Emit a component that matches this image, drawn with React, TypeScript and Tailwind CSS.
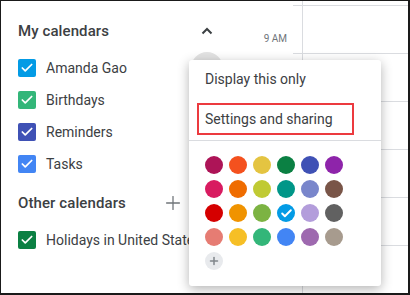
import { Check, Plus } from "lucide-react";

const calendars = [
  { name: "Amanda Gao", color: "bg-[#039be5]", active: true },
  { name: "Birthdays", color: "bg-[#33b679]" },
  { name: "Reminders", color: "bg-[#3f51b5]" },
  { name: "Tasks", color: "bg-[#4285f4]" },
];

const swatches = [
  ["bg-[#ad1457]", "bg-[#f4511e]", "bg-[#e4c441]", "bg-[#0b8043]", "bg-[#3f51b5]", "bg-[#8e24aa]"],
  ["bg-[#d81b60]", "bg-[#ef6c00]", "bg-[#c0ca33]", "bg-[#009688]", "bg-[#7986cb]", "bg-[#795548]"],
  ["bg-[#d50000]", "bg-[#f09300]", "bg-[#7cb342]", "bg-[#039be5]", "bg-[#b39ddb]", "bg-[#616161]"],
  ["bg-[#e67c73]", "bg-[#f6bf26]", "bg-[#33b679]", "bg-[#4285f4]", "bg-[#9e69af]", "bg-[#a79b8e]"],
];

const Chevron = () => (
  <svg width="12" height="8" viewBox="0 0 12 8" className="text-[#3c4043]">
    <path d="M1.5 6.5 L6 2 L10.5 6.5" fill="none" stroke="currentColor" strokeWidth="2" />
  </svg>
);

const Box = ({ color }: { color: string }) => (
  <div className={`w-[18px] h-[18px] rounded-[2px] flex items-center justify-center ${color}`}>
    <Check className="w-[14px] h-[14px] text-white" strokeWidth={3} />
  </div>
);

export default function App() {
  return (
    <div className="relative w-[410px] h-[295px] overflow-hidden bg-white border-[#1a1a1a] border-t border-l border-r-2 border-b-2 flex font-['Roboto',sans-serif]">
      {/* Sidebar */}
      <div className="w-[225px] shrink-0 flex flex-col pt-[14px] pl-[17px]">
        <div className="h-[32px] flex items-center justify-between pr-[13px]">
          <span className="text-[15px] font-medium text-[#3c4043] tracking-[0.1px]">My calendars</span>
          <Chevron />
        </div>
        <div className="mt-[5px] flex flex-col">
          {calendars.map((c) => (
            <div key={c.name} className="h-[32px] flex items-center">
              <Box color={c.color} />
              <span className="ml-[10px] text-[14px] text-[#3c4043] whitespace-nowrap">{c.name}</span>
              {c.active && <div className="ml-auto mr-[3px] w-[32px] h-[32px] rounded-full bg-[#e3e3e3]" />}
            </div>
          ))}
        </div>
        <div className="mt-[7px] h-[32px] flex items-center">
          <span className="text-[15px] font-medium text-[#3c4043] tracking-[0.1px]">Other calendars</span>
          <Plus className="ml-auto w-[22px] h-[22px] text-[#70757a]" strokeWidth={1.4} />
          <div className="ml-[17px] mr-[13px]">
            <Chevron />
          </div>
        </div>
        <div className="mt-[5px] h-[32px] flex items-center">
          <Box color="bg-[#0b8043]" />
          <span className="ml-[10px] text-[14px] text-[#3c4043] whitespace-nowrap">Holidays in United States</span>
        </div>
      </div>

      {/* Time gutter */}
      <div className="w-[67px] shrink-0 flex flex-col items-end pt-[32px] pr-[6px]">
        <span className="text-[10px] leading-[12px] text-[#70757a]">9 AM</span>
      </div>

      {/* Grid */}
      <div className="flex-1 flex flex-col">
        <div className="h-[38px] flex">
          <div className="w-[9px]" />
          <div className="flex-1 border-l border-[#dadce0]" />
        </div>
        {[0, 1, 2, 3, 4, 5].map((i) => (
          <div key={i} className="h-[48px] shrink-0 flex border-t border-[#dadce0]">
            <div className="w-[9px]" />
            <div className="flex-1 border-l border-[#dadce0]" />
          </div>
        ))}
      </div>

      {/* Context menu */}
      <div className="absolute left-[188px] top-[59px] w-[192px] bg-white rounded-[3px] shadow-[0_3px_12px_rgba(0,0,0,0.3)] flex flex-col">
        <div className="h-[38px] flex items-center pl-[16px] text-[14px] text-[#3c4043]">Display this only</div>
        <div className="h-[42px] flex items-center pl-[8px]">
          <div className="w-[157px] h-[32px] border-2 border-[#ec3a3f] flex items-center pl-[6px] text-[14px] text-[#3c4043]">
            Settings and sharing
          </div>
        </div>
        <div className="border-t border-[#dadce0]" />
        <div className="pt-[15px] pb-[16px] pl-[16px] flex flex-col gap-[6px]">
          {swatches.map((row, r) => (
            <div key={r} className="flex gap-[6px]">
              {row.map((s, i) => (
                <div key={i} className={`w-[18px] h-[18px] rounded-full flex items-center justify-center ${s}`}>
                  {r === 2 && i === 3 && <Check className="w-[13px] h-[13px] text-white" strokeWidth={3.5} />}
                </div>
              ))}
            </div>
          ))}
          <div className="w-[18px] h-[18px] rounded-full bg-[#e8eaed] flex items-center justify-center">
            <Plus className="w-[12px] h-[12px] text-[#80868b]" strokeWidth={3} />
          </div>
        </div>
      </div>
    </div>
  );
}
